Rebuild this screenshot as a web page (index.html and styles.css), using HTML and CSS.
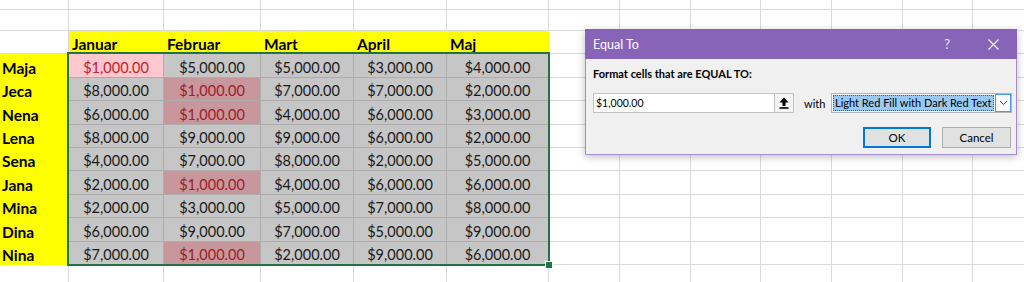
FILE: index.html
```html
<!DOCTYPE html>
<html lang="sr">
<head>
  <meta charset="UTF-8">
  <meta name="viewport" content="width=device-width, initial-scale=1.0">
  <title>Equal To</title>
  <link rel="stylesheet" href="styles.css">
</head>

<body>

<div class="page">
  <div class="sheet" id="sheet"></div>

  <div class="selection">
    <span class="handle"></span>
  </div>

  <div class="dialog">
    <div class="dialog-title">
      <span class="title-text">Equal To</span>
      <span class="title-help">?</span>
      <svg class="title-close" width="11" height="11" viewBox="0 0 11 11">
        <path d="M0.5 0.5 L10.5 10.5 M10.5 0.5 L0.5 10.5" stroke="#fff" stroke-width="1.1" fill="none"/>
      </svg>
    </div>
    <div class="dialog-body">
      <div class="dialog-label">Format cells that are EQUAL TO:</div>
      <div class="dialog-row">
        <div class="ref-input">
          <span class="ref-value">$1,000.00</span>
          <span class="ref-button">
            <svg width="10" height="12" viewBox="0 0 10 12">
              <path d="M5 0.5 L9.5 5.5 L6.5 5.5 L6.5 9 L3.5 9 L3.5 5.5 L0.5 5.5 Z" fill="#000"/>
              <rect x="0.5" y="10.2" width="9" height="1.6" fill="#000"/>
            </svg>
          </span>
        </div>
        <span class="with">with</span>
        <div class="format-select">
          <span class="format-value">Light Red Fill with Dark Red Text</span>
          <span class="format-arrow">
            <svg width="9" height="6" viewBox="0 0 9 6">
              <path d="M1 1 L4.5 4.5 L8 1" stroke="#444" stroke-width="1" fill="none"/>
            </svg>
          </span>
        </div>
      </div>
      <div class="dialog-buttons">
        <button class="btn btn-ok">OK</button>
        <button class="btn">Cancel</button>
      </div>
    </div>
  </div>
</div>

<script>
  const months = ["Januar", "Februar", "Mart", "April", "Maj"];
  const people = [
    ["Maja", 1000, 5000, 5000, 3000, 4000],
    ["Jeca", 8000, 1000, 7000, 7000, 2000],
    ["Nena", 6000, 1000, 4000, 6000, 3000],
    ["Lena", 8000, 9000, 9000, 6000, 2000],
    ["Sena", 4000, 7000, 8000, 2000, 5000],
    ["Jana", 2000, 1000, 4000, 6000, 6000],
    ["Mina", 2000, 3000, 5000, 7000, 8000],
    ["Dina", 6000, 9000, 7000, 5000, 9000],
    ["Nina", 7000, 1000, 2000, 9000, 6000]
  ];
  const totalCols = 13;
  const sheet = document.getElementById("sheet");

  function addCell(cls, text) {
    const cell = document.createElement("div");
    cell.className = "cell " + cls;
    if (text) cell.textContent = text;
    sheet.appendChild(cell);
  }

  function money(n) {
    return "$" + n.toLocaleString("en-US") + ".00";
  }

  // dvije prazne vrste iznad tabele
  for (let r = 0; r < 2; r++) {
    for (let c = 0; c < totalCols; c++) addCell("");
  }

  // zaglavlje
  addCell("");
  months.forEach(m => addCell("yellow head", m));
  for (let c = 6; c < totalCols; c++) addCell("");

  people.forEach((row, r) => {
    addCell("yellow name", row[0]);
    for (let c = 1; c <= 5; c++) {
      let cls = "sel";
      if (row[c] === 1000) cls = (r === 0 && c === 1) ? "active" : "sel hit";
      addCell(cls, money(row[c]));
    }
    for (let c = 6; c < totalCols; c++) addCell("");
  });

  for (let c = 0; c < totalCols; c++) addCell("");
</script>

</body>
</html>
```

FILE: styles.css
```css
body {
    margin: 0;
    padding: 0;
    background: #fff;
    overflow: hidden;
}

.page {
    position: relative;
    width: 1024px;
    height: 282px;
    overflow: hidden;
}

.sheet {
    display: grid;
    grid-template-columns: 69px 95px 97px 93px 93px 102px 71px 71px 70px 71px 71px 70px 71px;
    grid-template-rows: 10px 21px 23px 24px 23px 24px 23px 23px 24px 23px 24px 23px 30px;
    font-family: Lato, "Liberation Sans", sans-serif;
    font-size: 14.5px;
    color: #000;
}

.cell {
    box-sizing: border-box;
    border-right: 1px solid #dadada;
    border-bottom: 1px solid #dadada;
    display: flex;
    align-items: flex-end;
    justify-content: center;
    line-height: 16px;
    padding-bottom: 1px;
    white-space: nowrap;
    overflow: hidden;
}

.yellow {
    background: #ffff00;
    border-color: #ffff00;
    font-weight: bold;
    font-size: 15.5px;
    justify-content: flex-start;
}

.head {
    padding-left: 3px;
    padding-bottom: 1px;
}

.name {
    padding-left: 2px;
}

.sel {
    background: #c6c6c6;
    border-color: #adadad;
    color: #1a1a1a;
}

.hit {
    background: #c8979c;
    color: #9e1c26;
}

.active {
    background: #ffc7ce;
    border-color: #adadad;
    color: #c4202c;
}

.selection {
    position: absolute;
    left: 67px;
    top: 52px;
    width: 479px;
    height: 210px;
    border: 2px solid #217346;
}

.handle {
    position: absolute;
    right: -5px;
    bottom: -5px;
    width: 6px;
    height: 6px;
    background: #217346;
    border: 1px solid #fff;
}

/* dialog */

.dialog {
    position: absolute;
    left: 585px;
    top: 29px;
    width: 432px;
    height: 126px;
    box-sizing: border-box;
    border: 1px solid #a58bd0;
    background: #f0f0f0;
    box-shadow: 0 2px 8px rgba(0, 0, 0, 0.25);
    font-family: Lato, "Noto Sans", sans-serif;
    font-size: 10.5px;
    color: #000;
    display: flex;
    flex-direction: column;
}

.dialog-title {
    height: 30px;
    margin: -1px -1px 0 -1px;
    background: #8764b8;
    color: #fff;
    display: flex;
    align-items: center;
    padding: 0 18px 0 8px;
}

.title-text {
    font-size: 12.5px;
    flex: 1;
}

.title-help {
    font-size: 13px;
    color: #ece6f5;
    margin-right: 38px;
}

.dialog-body {
    flex: 1;
    padding: 7px 4px 0 7px;
    display: flex;
    flex-direction: column;
}

.dialog-label {
    font-weight: bold;
    font-size: 11px;
    line-height: 16px;
}

.dialog-row {
    display: flex;
    align-items: center;
    margin-top: 11px;
    height: 20px;
}

.ref-input {
    width: 201px;
    height: 20px;
    box-sizing: border-box;
    border: 1px solid #c4c4c4;
    background: #fff;
    display: flex;
    align-items: center;
}

.ref-value {
    flex: 1;
    padding-left: 2px;
}

.ref-button {
    width: 19px;
    height: 18px;
    box-sizing: border-box;
    border-left: 1px solid #c4c4c4;
    background: #f4f4f4;
    display: flex;
    align-items: center;
    justify-content: center;
}

.with {
    margin-left: 10px;
    font-size: 11px;
}

.format-select {
    margin-left: auto;
    width: 181px;
    height: 20px;
    box-sizing: border-box;
    border: 1px solid #b4b4b4;
    background: #fff;
    display: flex;
    align-items: center;
    padding-left: 1px;
}

.format-value {
    flex: 1;
    height: 16px;
    line-height: 16px;
    box-sizing: border-box;
    background: #99c9f7;
    outline: 1px dotted #555;
    outline-offset: -1px;
    padding-left: 2px;
    font-size: 11px;
    white-space: nowrap;
    overflow: hidden;
}

.format-arrow {
    width: 16px;
    height: 18px;
    box-sizing: border-box;
    margin-left: 1px;
    border: 1px solid #4a9ce8;
    background: #fff;
    display: flex;
    align-items: center;
    justify-content: center;
}

.dialog-buttons {
    display: flex;
    justify-content: flex-end;
    gap: 11px;
    margin-top: 14px;
    padding-right: 1px;
}

.btn {
    width: 69px;
    height: 21px;
    box-sizing: border-box;
    border: 1px solid #adadad;
    background: #e1e1e1;
    font-family: Lato, "Noto Sans", sans-serif;
    font-size: 11.5px;
    color: #000;
    padding: 0;
}

.btn-ok {
    width: 68px;
    border: 2px solid #0078d7;
}
```
